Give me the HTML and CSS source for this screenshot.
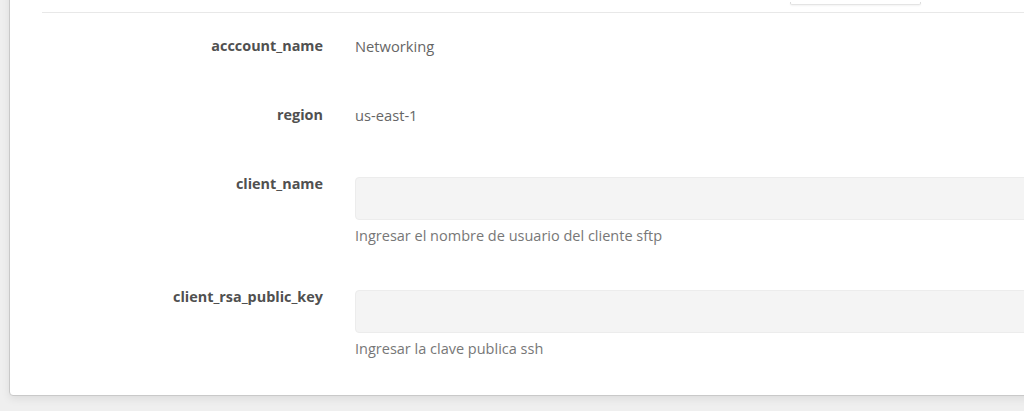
FILE: index.html
```html
<!DOCTYPE html>
<html lang="es">
<head>
<meta charset="utf-8">
<title>Form</title>
<link rel="stylesheet" href="styles.css">
</head>
<body>
<div class="card">
  <div class="card-header">
    <div class="header-btn"></div>
  </div>
  <div class="form">
    <div class="row static">
      <div class="label">acccount_name</div>
      <div class="value">Networking</div>
    </div>
    <div class="row static">
      <div class="label">region</div>
      <div class="value">us-east-1</div>
    </div>
    <div class="row">
      <div class="label">client_name</div>
      <div class="field">
        <input class="input" type="text">
        <div class="help">Ingresar el nombre de usuario del cliente sftp</div>
      </div>
    </div>
    <div class="row last">
      <div class="label">client_rsa_public_key</div>
      <div class="field">
        <input class="input" type="text">
        <div class="help">Ingresar la clave publica ssh</div>
      </div>
    </div>
  </div>
</div>
</body>
</html>
```
FILE: styles.css
```css
html, body {
  margin: 0;
  padding: 0;
  background: #efefef;
  overflow: hidden;
  height: 411px;
}
body {
  font-family: "Open Sans", Lato, sans-serif;
  font-size: 14.5px;
  color: #666;
}
.card {
  margin: -20px -30px 0 9px;
  background: #fff;
  border: 1px solid #c9c9c9;
  border-radius: 4px;
  box-shadow: 0 3px 8px rgba(0,0,0,0.08);
  padding: 0 0 36px 32px;
}
.card-header {
  height: 32px;
  border-bottom: 1px solid #e8e8e8;
  display: flex;
  justify-content: flex-end;
  align-items: flex-end;
  padding-right: 132px;
  padding-bottom: 7px;
  box-sizing: border-box;
}
.header-btn {
  width: 129px;
  height: 2px;
  border-bottom: 1px solid #e4e4e4;
  border-left: 1px solid #dcdcdc;
  border-right: 1px solid #dcdcdc;
  border-radius: 0 0 2px 2px;
  box-shadow: 0 1px 2px rgba(0,0,0,0.05);
}
.form {
  padding-top: 23px;
}
.row {
  display: grid;
  grid-template-columns: 281px 1fr;
  column-gap: 32px;
  margin-bottom: 41px;
  line-height: 20px;
}
.row.static {
  padding-bottom: 8px;
}
.row.last {
  margin-bottom: 0;
}
.label {
  text-align: right;
  font-weight: 700;
  color: #505050;
  font-size: 14.4px;
}
.value {
  color: #666;
  font-size: 14.7px;
}
.field {
  padding-top: 3px;
}
.input {
  display: block;
  width: 100%;
  height: 43px;
  box-sizing: border-box;
  background: #f4f4f4;
  border: 1px solid #ececec;
  border-radius: 4px;
  margin: 0;
  padding: 0 12px;
  font: inherit;
}
.help {
  margin-top: 6px;
  color: #777;
}
```
